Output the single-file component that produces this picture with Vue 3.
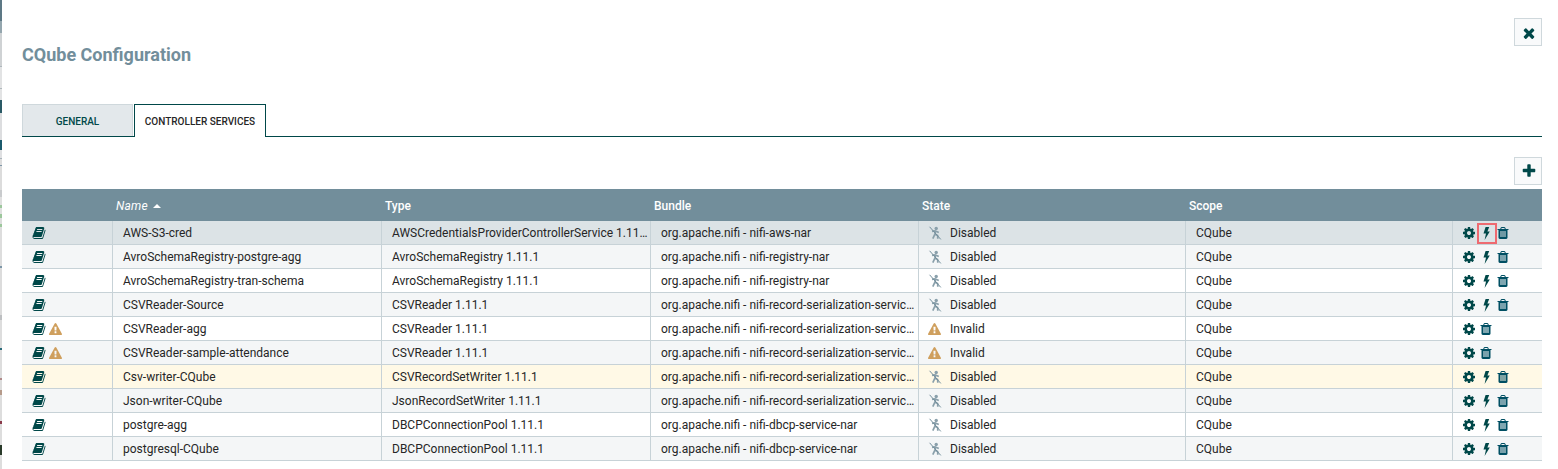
<script setup>
const strip = [
  [21, '#5d7885'], [12, '#94a6ae'], [33, '#cfd2d4'], [1, '#aeb7bc'], [21, '#e2e3e4'], [1, '#b0b8bc'], [11, '#e2e3e4'],
  [13, '#2a5a66'], [27, '#dcdddf'], [10, '#1b5a6c'], [8, '#dfe0e2'], [1, '#a9b4bb'], [6, '#dddddd'], [1, '#7d96a8'],
  [24, '#dcdcdc'], [7, '#c9cbcd'], [8, '#e0e0e0'], [3, '#9cc79c'], [6, '#e0e0e0'], [4, '#9cc79c'], [6, '#dddddd'],
  [3, '#9cc79c'], [39, '#dddddd'], [2, '#7d96a8'], [47, '#dcdcdc'], [5, '#bdbfc1'], [28, '#dddddd'], [2, '#2a6b7a'],
  [28, '#dddddd'], [2, '#b08a8a'], [10, '#dddddd'], [5, '#b59a8a'], [26, '#dddddd'], [3, '#8a3a4a'], [21, '#dddddd'],
  [10, '#2a3a2a'], [14, '#dddddd']
]

const rows = [
  { name: 'AWS-S3-cred', type: 'AWSCredentialsProviderControllerService 1.11.1', bundle: 'org.apache.nifi - nifi-aws-nar', tone: 'selected', marked: true },
  { name: 'AvroSchemaRegistry-postgre-agg', type: 'AvroSchemaRegistry 1.11.1', bundle: 'org.apache.nifi - nifi-registry-nar', tone: 'even' },
  { name: 'AvroSchemaRegistry-tran-schema', type: 'AvroSchemaRegistry 1.11.1', bundle: 'org.apache.nifi - nifi-registry-nar', tone: 'odd' },
  { name: 'CSVReader-Source', type: 'CSVReader 1.11.1', bundle: 'org.apache.nifi - nifi-record-serialization-services-nar', tone: 'even' },
  { name: 'CSVReader-agg', type: 'CSVReader 1.11.1', bundle: 'org.apache.nifi - nifi-record-serialization-services-nar', tone: 'odd', invalid: true },
  { name: 'CSVReader-sample-attendance', type: 'CSVReader 1.11.1', bundle: 'org.apache.nifi - nifi-record-serialization-services-nar', tone: 'even', invalid: true },
  { name: 'Csv-writer-CQube', type: 'CSVRecordSetWriter 1.11.1', bundle: 'org.apache.nifi - nifi-record-serialization-services-nar', tone: 'highlight' },
  { name: 'Json-writer-CQube', type: 'JsonRecordSetWriter 1.11.1', bundle: 'org.apache.nifi - nifi-record-serialization-services-nar', tone: 'even' },
  { name: 'postgre-agg', type: 'DBCPConnectionPool 1.11.1', bundle: 'org.apache.nifi - nifi-dbcp-service-nar', tone: 'odd' },
  { name: 'postgresql-CQube', type: 'DBCPConnectionPool 1.11.1', bundle: 'org.apache.nifi - nifi-dbcp-service-nar', tone: 'even' }
]

const book = 'M1703 478q40 57 18 129l-275 906q-19 64-76.500 107.500t-122.500 43.500h-923q-77 0-148.500-53.500t-99.500-131.500q-24-67-2-127 0-4 3-27t4-37q1-8-3-21.500t-3-19.500q2-11 8-21t16.500-23.500 16.500-23.500q23-38 45-91.500t30-91.500q3-10 .5-30t-.5-28q3-11 17-28t17-23q21-36 42-92t25-90q1-9-2.500-32t.5-28q4-13 22-30.500t22-22.500q19-26 42.500-84.500t27.500-96.500q1-8-3-25.500t-2-26.500q2-8 9-18t18-23 17-21q8-12 16.500-30.500t15-35 16-36 19.500-32 26.500-23.500 36-11.500 47.500 5.500l-1 3q38-9 51-9h761q74 0 114 56t18 130l-274 906q-36 119-71.500 153.500t-128.500 34.500h-869q-27 0-38 15-11 16-1 43 24 70 144 70h923q29 0 56-15.500t35-41.500l300-987q7-22 5-57 38 15 59 43zm-1064 2q-4 13 2 22.500t20 9.500h608q13 0 25.500-9.500t16.500-22.500l21-64q4-13-2-22.500t-20-9.500h-608q-13 0-25.500 9.500t-16.500 22.500zm-83 256q-4 13 2 22.500t20 9.500h608q13 0 25.500-9.500t16.500-22.500l21-64q4-13-2-22.500t-20-9.500h-608q-13 0-25.500 9.500t-16.500 22.500z'
const warning = 'M1024 1375v-190q0-14-9.500-23.500t-22.500-9.500h-192q-13 0-22.500 9.500t-9.500 23.500v190q0 14 9.500 23.500t22.500 9.500h192q13 0 22.500-9.500t9.500-23.500zm-2-374l18-459q0-12-10-19-13-11-24-11h-220q-11 0-24 11-10 7-10 21l17 457q0 10 10 16.500t24 6.500h185q14 0 23.500-6.500t10.500-16.500zm-14-934l768 1408q35 63-2 126-17 29-46.500 46t-63.500 17h-1536q-34 0-63.500-17t-46.500-46q-37-63-2-126l768-1408q17-31 47-49t65-18 65 18 47 49z'
const cog = 'M1152 896q0-106-75-181t-181-75-181 75-75 181 75 181 181 75 181-75 75-181zm512-109v222q0 12-8 23t-20 13l-185 28q-19 54-39 91 35 50 107 138 10 12 10 25t-9 23q-27 37-99 108t-94 71q-12 0-26-9l-138-108q-44 23-91 38-16 136-29 186-7 28-36 28h-222q-14 0-24.500-8.500t-11.500-21.500l-28-184q-49-16-90-37l-141 107q-10 9-25 9-14 0-25-11-126-114-165-168-7-10-7-23 0-12 8-23 15-21 51-66.500t54-70.500q-27-50-41-99l-183-27q-13-2-21-12.500t-8-23.500v-222q0-12 8-23t19-13l186-28q14-46 39-92-40-57-107-138-10-12-10-24 0-10 9-23 26-36 98.500-107.500t94.500-71.500q13 0 26 10l138 107q44-23 91-38 16-136 29-186 7-28 36-28h222q14 0 24.500 8.500t11.500 21.500l28 184q49 16 90 37l142-107q9-9 24-9 13 0 25 10 129 119 165 170 7 8 7 22 0 12-8 23-15 21-51 66.500t-54 70.500q26 50 41 98l183 28q13 2 21 12.500t8 23.500z'
const trash = 'M704 1376v-704q0-14-9-23t-23-9h-64q-14 0-23 9t-9 23v704q0 14 9 23t23 9h64q14 0 23-9t9-23zm256 0v-704q0-14-9-23t-23-9h-64q-14 0-23 9t-9 23v704q0 14 9 23t23 9h64q14 0 23-9t9-23zm256 0v-704q0-14-9-23t-23-9h-64q-14 0-23 9t-9 23v704q0 14 9 23t23 9h64q14 0 23-9t9-23zm-544-992h448l-48-117q-7-9-17-11h-317q-10 2-17 11zm928 32v64q0 14-9 23t-23 9h-96v948q0 83-47 143.500t-113 60.500h-832q-66 0-113-58.500t-47-141.500v-952h-96q-14 0-23-9t-9-23v-64q0-14 9-23t23-9h309l70-167q15-37 54-63t79-26h320q40 0 79 26t54 63l70 167h309q14 0 23 9t9 23z'
const times = 'M1490 1322q0 40-28 68l-136 136q-28 28-68 28t-68-28l-294-294-294 294q-28 28-68 28t-68-28l-136-136q-28-28-28-68t28-68l294-294-294-294q-28-28-28-68t28-68l136-136q28-28 68-28t68 28l294 294 294-294q28-28 68-28t68 28l136 136q28 28 28 68t-28 68l-294 294 294 294q28 28 28 68z'
const plus = 'M1600 736v192q0 40-28 68t-68 28h-416v416q0 40-28 68t-68 28h-192q-40 0-68-28t-28-68v-416h-416q-40 0-68-28t-28-68v-192q0-40 28-68t68-28h416v-416q0-40 28-68t68-28h192q40 0 68 28t28 68v416h416q40 0 68 28t28 68z'
</script>

<template>
  <div class="page">
    <div class="strip">
      <div v-for="(s, i) in strip" :key="i" :style="{ height: s[0] + 'px', background: s[1] }"></div>
    </div>
    <div class="dialog">
      <div class="head">
        <h1 class="title">CQube Configuration</h1>
        <button class="square">
          <svg class="sq-icon close" viewBox="0 0 1792 1792"><path :d="times" /></svg>
        </button>
      </div>

      <div class="tabs">
        <div class="tab">General</div>
        <div class="tab active">Controller Services</div>
      </div>

      <div class="tools">
        <button class="square">
          <svg class="sq-icon" viewBox="0 0 1792 1792"><path :d="plus" /></svg>
        </button>
      </div>

      <div class="table">
        <div class="row header">
          <div class="hc"></div>
          <div class="hc sorted">Name <span class="caret"></span></div>
          <div class="hc">Type</div>
          <div class="hc">Bundle</div>
          <div class="hc">State</div>
          <div class="hc">Scope</div>
          <div class="hc"></div>
        </div>
        <div v-for="r in rows" :key="r.name" class="row body" :class="r.tone">
          <div class="c marks">
            <svg class="i-book" viewBox="0 0 1792 1792"><path :d="book" /></svg>
            <svg v-if="r.invalid" class="i-warn" viewBox="0 0 1792 1792"><path :d="warning" /></svg>
          </div>
          <div class="c">{{ r.name }}</div>
          <div class="c">{{ r.type }}</div>
          <div class="c">{{ r.bundle }}</div>
          <div class="c state">
            <svg v-if="r.invalid" class="i-warn state-icon warn-gap" viewBox="0 0 1792 1792"><path :d="warning" /></svg>
            <svg v-else class="i-off state-icon" viewBox="0 0 14 14">
              <circle cx="8.2" cy="2.5" r="1.7" />
              <path class="limb" d="M4 5.4 7 4.8 10.8 6.6M7.6 5 6.9 8.2 4.8 12.6M7 8 9.6 9.4 9.8 12.8" />
              <path class="slash" d="M1.6 .8 12.8 13.4" />
            </svg>
            <span>{{ r.invalid ? 'Invalid' : 'Disabled' }}</span>
          </div>
          <div class="c">CQube</div>
          <div class="c actions">
            <svg class="i-cog" viewBox="0 0 1792 1792"><path :d="cog" /></svg>
            <span v-if="!r.invalid" class="bolt-wrap">
              <svg class="i-bolt" viewBox="0 0 7 13"><path d="M2.6 0H6.2L4.4 4.4H6.8L1.6 13 3 6.6H.5Z" /></svg>
              <span v-if="r.marked" class="mark"></span>
            </span>
            <svg class="i-trash" viewBox="0 0 1792 1792"><path :d="trash" /></svg>
          </div>
        </div>
      </div>
    </div>
  </div>
</template>

<style>
html, body { margin: 0; background: #fff; overflow: hidden; }
</style>

<style scoped>
.page {
  display: flex;
  width: 1558px;
  height: 469px;
  overflow: hidden;
  font-family: Roboto, "Liberation Sans", sans-serif;
  background: #fff;
}
.strip { width: 2px; flex: none; background: #ddd; }
.dialog {
  flex: 1;
  min-width: 0;
  box-sizing: border-box;
  padding: 18px 16px 0 20px;
}
.head {
  display: flex;
  justify-content: space-between;
  align-items: flex-start;
  height: 86px;
}
.title {
  margin: 26px 0 0;
  font-size: 18px;
  line-height: 22px;
  font-weight: 700;
  color: #728e9b;
}
.square {
  box-sizing: border-box;
  width: 28px;
  height: 28px;
  padding: 0;
  display: flex;
  align-items: center;
  justify-content: center;
  border: 1px solid #cfd8dc;
  background: #f9fafb;
}
.sq-icon { width: 16px; height: 16px; fill: #004849; margin-left: 2px; }
.close { margin-top: 2px; }
.tabs {
  display: flex;
  height: 33px;
  box-sizing: border-box;
  border-bottom: 1px solid #004849;
}
.tab {
  box-sizing: border-box;
  width: 111px;
  height: 32px;
  margin-right: 1px;
  padding-top: 2px;
  display: flex;
  align-items: center;
  justify-content: center;
  font-size: 10px;
  font-weight: 500;
  text-transform: uppercase;
  color: #004849;
  background: #e3e8eb;
  border: 1px solid #cfd8dc;
  border-bottom: 0;
}
.tab.active {
  width: 132px;
  height: 33px;
  padding-top: 0;
  color: #262626;
  background: #fff;
  border: 1px solid #004849;
  border-bottom: 0;
  position: relative;
  z-index: 1;
}
.tools {
  display: flex;
  justify-content: flex-end;
  padding: 20px 0 4px;
}
.row {
  display: grid;
  grid-template-columns: 91px 269px 269px 268px 267px 267px 89px;
}
.header {
  height: 32px;
  background: #728e9b;
  color: #fff;
  font-size: 12px;
  font-weight: 500;
}
.hc {
  padding-left: 3px;
  display: flex;
  align-items: center;
  gap: 4px;
  padding-top: 1px;
}
.sorted { font-style: italic; font-weight: 400; letter-spacing: 0.2px; }
.caret {
  width: 0;
  height: 0;
  margin-left: 1px;
  border-left: 4px solid transparent;
  border-right: 4px solid transparent;
  border-bottom: 4px solid #fff;
}
.body {
  height: 24px;
  box-sizing: border-box;
  border-bottom: 1px solid #c7d2d7;
  font-size: 12px;
  color: #262626;
}
.selected { background: #dce3e6; }
.even { background: #f4f6f7; }
.odd { background: #fff; }
.highlight { background: #fff9e6; }
.c {
  box-sizing: border-box;
  min-width: 0;
  padding: 1px 2px 0 10px;
  line-height: 22px;
  white-space: nowrap;
  overflow: hidden;
  text-overflow: ellipsis;
  border-right: 1px solid #c7d2d7;
}
.c:last-child { border-right: 0; }
.marks, .state, .actions {
  display: flex;
  align-items: center;
}
.state { padding-left: 9px; }
.state-icon { margin-right: 8px; }
.warn-gap { margin-right: 9px; }
.marks svg, .actions svg, .state svg { flex: none; display: block; }
.i-book { width: 14px; height: 14px; fill: #004849; }
.i-warn { width: 13px; height: 13px; fill: #cf9f5d; }
.marks .i-warn { margin-left: 3px; }
.i-off { width: 14px; height: 14px; fill: #8aa0ab; }
.limb { fill: none; stroke: #8aa0ab; stroke-width: 1.7; }
.slash { fill: none; stroke: #728e9b; stroke-width: 1; }
.actions { padding-left: 9px; overflow: visible; }
.i-cog { width: 14px; height: 14px; fill: #004849; margin-right: 3px; }
.bolt-wrap {
  position: relative;
  width: 13px;
  height: 13px;
  display: flex;
  align-items: center;
  justify-content: center;
  flex: none;
  margin: 0 3px 0 1px;
}
.i-bolt { width: 7px; height: 13px; fill: #004849; }
.mark {
  position: absolute;
  left: -3px;
  top: -4px;
  width: 20px;
  height: 21px;
  box-sizing: border-box;
  border: 2px solid #ee6a70;
}
.i-trash { width: 14px; height: 14px; fill: #004f63; }
</style>
